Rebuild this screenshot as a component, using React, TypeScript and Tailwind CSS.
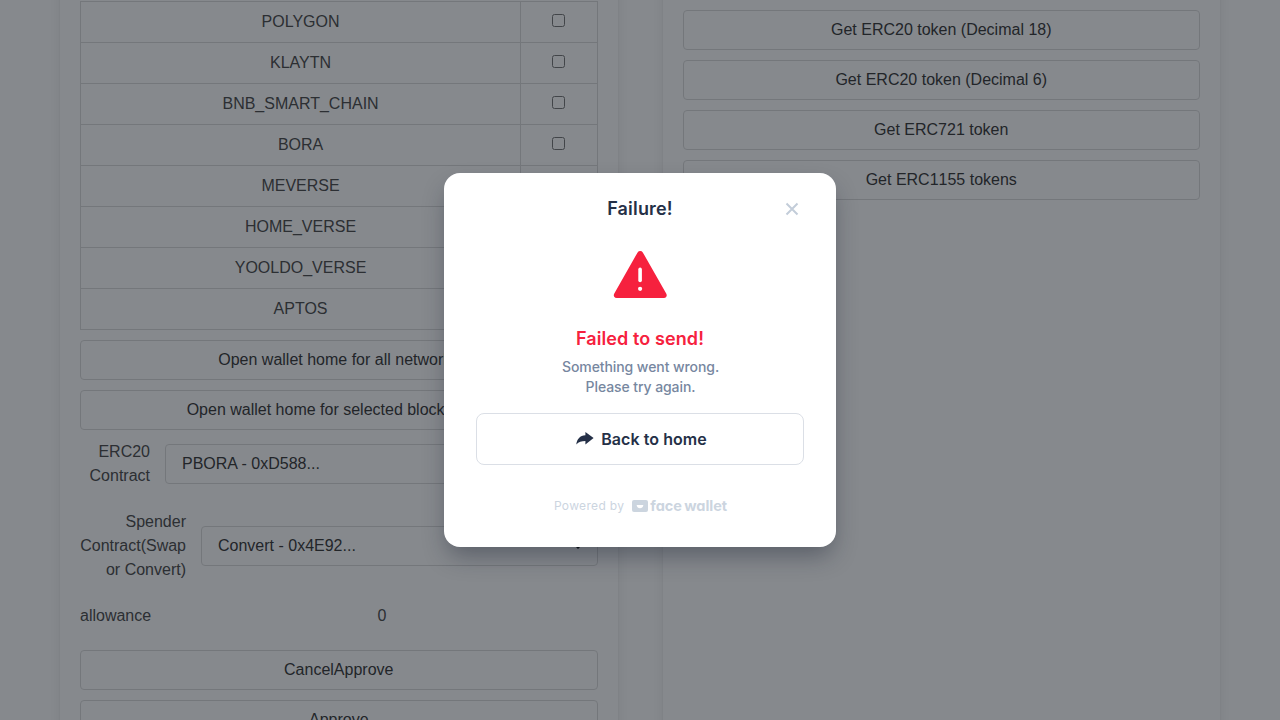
import type { ReactNode } from "react";

const networks = ["POLYGON", "KLAYTN", "BNB_SMART_CHAIN", "BORA", "MEVERSE", "HOME_VERSE", "YOOLDO_VERSE", "APTOS"];
const tokens = ["Get ERC20 token (Decimal 18)", "Get ERC20 token (Decimal 6)", "Get ERC721 token", "Get ERC1155 tokens"];

function Panel({ children }: { children: ReactNode }) {
  return (
    <section className="-mt-10 h-[820px] min-w-0 flex-1 rounded-md bg-white px-5 shadow-[0_8px_16px_-2px_rgba(10,10,10,0.1),0_0_0_1px_rgba(10,10,10,0.02)]">
      {children}
    </section>
  );
}

function PageButton({ children }: { children: ReactNode }) {
  return (
    <button className="block h-10 w-full rounded border border-[#dbdbdb] bg-white text-center leading-6 whitespace-nowrap text-[#363636]">
      {children}
    </button>
  );
}

function SelectBox({ children }: { children: ReactNode }) {
  return (
    <div className="flex h-10 flex-1 items-center justify-between rounded border border-[#dbdbdb] pr-[15px] pl-4 text-[#363636]">
      <span>{children}</span>
      <svg width="8" height="6" viewBox="0 0 8 6" fill="none" className="stroke-black">
        <path d="M0.5 1.1L4 4.6L7.5 1.1" strokeWidth="2" />
      </svg>
    </div>
  );
}

function Dialog() {
  return (
    <div
      role="dialog"
      className="flex h-[374px] w-[392px] flex-col items-center rounded-2xl bg-white px-8 font-['Inter',sans-serif] text-[#253047] shadow-[0_12px_24px_-4px_rgba(20,28,45,0.4)]"
    >
      <header className="mt-[22px] grid h-7 w-full grid-cols-[24px_1fr_24px] items-center">
        <span />
        <h2 className="text-center text-lg leading-7 font-semibold tracking-[0.18px]">Failure!</h2>
        <button aria-label="Close" className="flex h-6 w-6 items-center justify-center">
          <svg width="14" height="14" viewBox="0 0 14 14" fill="none" className="stroke-[#c3cdd9]">
            <path d="M1.5 1.5L12.5 12.5M12.5 1.5L1.5 12.5" strokeWidth="2" />
          </svg>
        </button>
      </header>
      <svg width="54" height="48" viewBox="0 0 54 48" className="mt-[27px] shrink-0">
        <path d="M24.6 2.4Q25.5 1 27.2 1T29.8 2.4L53.2 43.6Q54.2 45.4 53.3 46.7Q52.5 48 50.8 48H3.8Q2 48 1.2 46.7Q0.3 45.4 1.3 43.6Z" fill="#f6213e" />
        <path d="M27.1 19.4V30.4" stroke="white" strokeWidth="3.6" strokeLinecap="round" />
        <circle cx="27.1" cy="38.8" r="2.1" fill="white" />
      </svg>
      <h3 className="mt-[27px] text-lg leading-7 font-semibold tracking-[0.1px] text-[#f6213e]">Failed to send!</h3>
      <p className="mt-1 pl-px text-center text-sm leading-5 font-medium tracking-[-0.08px] text-[#77879f]">
        Something went wrong.
        <br />
        Please try again.
      </p>
      <button className="mt-4 flex h-[52px] w-full shrink-0 items-center justify-center gap-[7px] rounded-lg border border-[#dbdfe6] pl-[3px] font-semibold tracking-[0.05px]">
        <svg width="18" height="14" viewBox="0 0 18 14" fill="currentColor">
          <path d="M9.4 0V3.3C4 3.6 0.9 7 0.3 12.4C2.8 9.8 5.4 8.9 9.4 8.9V12.4L17.6 6.1Z" />
        </svg>
        Back to home
      </button>
      <footer className="mt-[33px] flex h-4 items-center pl-px">
        <span className="text-xs leading-4 tracking-[0.33px] text-[#ccd5df]">Powered by</span>
        <svg width="16" height="12" viewBox="0 0 16 12" className="ml-2 shrink-0">
          <rect width="16" height="12" rx="2" fill="#ccd5df" />
          <path d="M4.6 5H11.4Q10.7 8.3 8 8.3T4.6 5Z" fill="white" />
        </svg>
        <span className="ml-[2px] text-[14.5px] leading-4 font-bold tracking-[-0.05px] text-[#ccd5df] [font-feature-settings:'cv11'] [word-spacing:-1px]">
          face wallet
        </span>
      </footer>
    </div>
  );
}

export default function App() {
  return (
    <div className="relative h-[720px] overflow-hidden bg-white font-['Liberation_Sans',Arial,sans-serif] text-base leading-6 text-[#4a4a4a]">
      <main className="flex gap-[45px] px-[60px]">
        <Panel>
          <table className="mt-[41px] w-full table-fixed border-collapse text-center">
            <colgroup>
              <col />
              <col className="w-[77px]" />
            </colgroup>
            <tbody>
              {networks.map((name) => (
                <tr key={name} className="h-[41px]">
                  <td className="border border-[#dbdbdb] py-2 pr-3 pl-[12.6px]">{name}</td>
                  <td className="border border-[#dbdbdb] px-3 py-2">
                    <input type="checkbox" aria-label={name} className="align-baseline" />
                  </td>
                </tr>
              ))}
            </tbody>
          </table>
          <div className="mt-[10px] flex flex-col gap-[10px]">
            <PageButton>Open wallet home for all networks</PageButton>
            <PageButton>Open wallet home for selected blockchains</PageButton>
          </div>
          <div className="mt-[10px] flex items-center gap-[15px]">
            <span className="w-[70px] text-right">ERC20 Contract</span>
            <SelectBox>PBORA - 0xD588...</SelectBox>
          </div>
          <div className="mt-[22px] flex items-center gap-[15px]">
            <span className="w-[106px] text-right">Spender Contract(Swap or Convert)</span>
            <SelectBox>Convert - 0x4E92...</SelectBox>
          </div>
          <div className="mt-[22px] flex gap-[15px]">
            <span>allowance</span>
            <span className="flex-1 text-center">0</span>
          </div>
          <div className="mt-[22px] flex flex-col gap-[10px]">
            <PageButton>CancelApprove</PageButton>
            <PageButton>Approve</PageButton>
          </div>
        </Panel>
        <Panel>
          <div className="mt-[50px] flex flex-col gap-[10px] [font-kerning:none]">
            {tokens.map((label) => (
              <PageButton key={label}>{label}</PageButton>
            ))}
          </div>
        </Panel>
      </main>
      <div className="absolute inset-0 flex items-center justify-center bg-[rgba(13,19,27,0.5)]">
        <Dialog />
      </div>
    </div>
  );
}
